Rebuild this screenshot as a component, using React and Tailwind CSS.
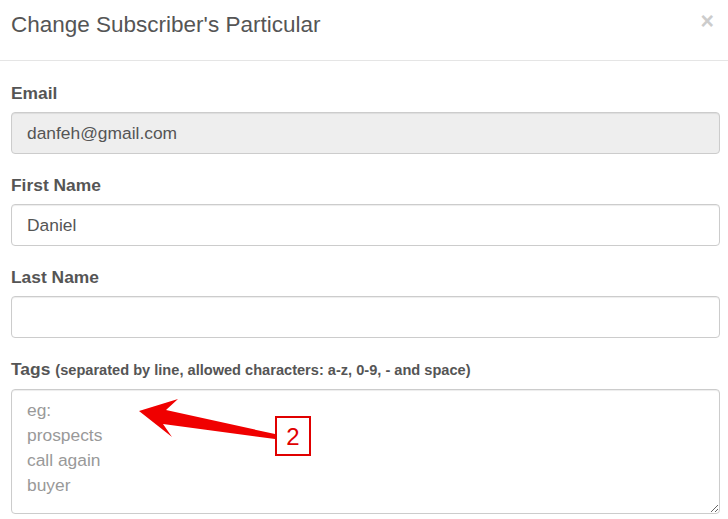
import React from 'react';

function Field({ label, hint, children }) {
    return (
        <div className="mb-[20px]">
            <label className="block mb-[8px] text-[17.4px] leading-[22px] font-bold text-[#555]">
                {label}
                {hint && <span className="text-[14.6px] ml-[5px]">{hint}</span>}
            </label>
            {children}
        </div>
    );
}

const inputCls =
    'block w-full h-[42px] px-[15px] text-[17.4px] text-[#555] border border-[#ccc] rounded-[4px] shadow-[inset_0_1px_1px_rgba(0,0,0,0.075)] outline-none';

export default function App() {
    return (
        <div className="relative w-[728px] h-[519px] overflow-hidden bg-white font-['Liberation_Sans',Arial,sans-serif]">
            {/* header */}
            <div className="h-[61px] border-b border-[#e5e5e5] px-[11px] pt-[9px] flex justify-between">
                <h4 className="text-[22.5px] leading-[31px] text-[#555]">Change Subscriber's Particular</h4>
                <button className="text-[23px] leading-[18px] font-bold text-[#ccc] h-[20px] mr-[3px] mt-[2px]">×</button>
            </div>

            {/* body */}
            <div className="pr-[8px] pl-[11px] pt-[21px]">
                <Field label="Email">
                    <input className={inputCls + ' bg-[#eee]'} value="danfeh@gmail.com" readOnly />
                </Field>
                <Field label="First Name">
                    <input className={inputCls + ' bg-white'} defaultValue="Daniel" />
                </Field>
                <Field label="Last Name">
                    <input className={inputCls + ' bg-white'} defaultValue="" />
                </Field>
                <Field label="Tags" hint="(separated by line, allowed characters: a-z, 0-9, - and space)">
                    <textarea
                        className="block w-full h-[125px] px-[15px] pt-[8px] text-[17.4px] leading-[25px] text-[#555] placeholder-[#999] border border-[#ccc] rounded-[4px] shadow-[inset_0_1px_1px_rgba(0,0,0,0.075)] outline-none resize-y"
                        placeholder={'eg:\nprospects\ncall again\nbuyer'}
                    />
                </Field>
            </div>

            {/* annotation arrow */}
            <svg className="absolute left-0 top-0 pointer-events-none" width="728" height="519" viewBox="0 0 728 519">
                <polygon
                    points="139,411 178,399 166,410 275,434 275,439 163,424 172,437"
                    fill="#f00000"
                />
            </svg>
            <div className="absolute left-[275px] top-[416px] w-[36px] h-[40px] border-2 border-[#e00000] bg-white flex items-center justify-center pt-[2px] text-[24px] text-[#e00000]">
                2
            </div>
        </div>
    );
}
